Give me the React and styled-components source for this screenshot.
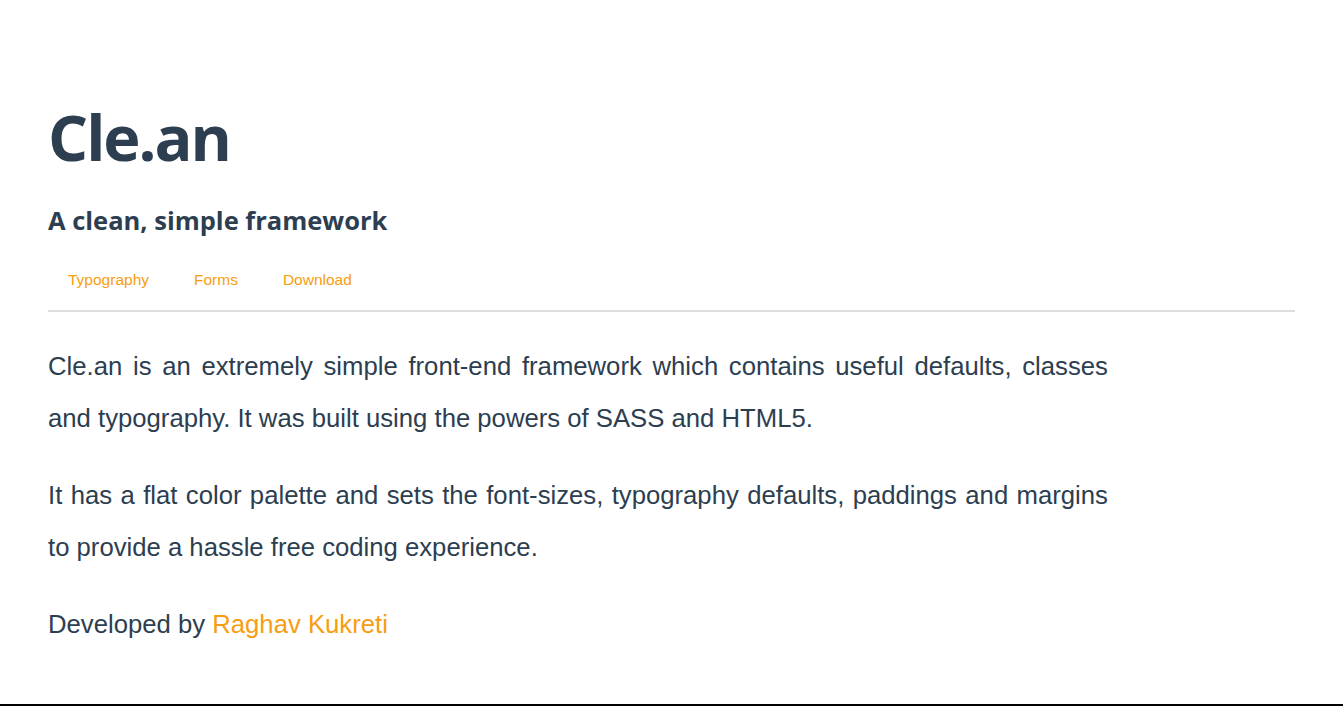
import styled, { createGlobalStyle } from "styled-components";

const GlobalStyle = createGlobalStyle`
    html, body {
        margin: 0;
        padding: 0;
        background: #fff;
    }
    body {
        font-family: "Liberation Sans", Arial, sans-serif;
        color: #2c3e50;
    }
`;

const Layout = styled.div`
    display: flex;
    flex-direction: column;
    min-height: 100vh;
`;

const Page = styled.div`
    padding: 0 48px;
`;

const Header = styled.header`
    padding-top: 92px;
    border-bottom: 2px solid #dddddd;
    padding-bottom: 20px;
`;

const Title = styled.h1`
    margin: 0;
    font-family: "Open Sans", "Noto Sans", sans-serif;
    font-weight: 700;
    font-size: 63px;
    line-height: 90px;
    letter-spacing: -2px;
    color: #2c3e50;
`;

const Subtitle = styled.h3`
    margin: 22px 0 0;
    font-family: "Open Sans", "Noto Sans", sans-serif;
    font-weight: 700;
    font-size: 25.5px;
    line-height: 32px;
    color: #2c3e50;
`;

const Nav = styled.nav`
    display: flex;
    margin-top: 34px;
    gap: 5px;
`;

const NavLink = styled.a`
    padding: 0 20px;
    font-size: 15.5px;
    line-height: 20px;
    color: #f89d10;
    text-decoration: none;
`;

const Content = styled.section`
    width: 85%;
    padding-top: 28px;
`;

const Paragraph = styled.p`
    margin: 0 0 25px;
    font-size: 25.7px;
    line-height: 52px;
    text-align: justify;
`;

const Accent = styled.a`
    color: #f89d10;
    text-decoration: none;
`;

const Footer = styled.footer`
    margin-top: auto;
    height: 2px;
    background: #000;
`;

function App() {
    return (
        <>
            <GlobalStyle />
            <Layout>
                <Page>
                    <Header>
                        <Title>Cle.an</Title>
                        <Subtitle>A clean, simple framework</Subtitle>
                        <Nav>
                            <NavLink href="#">Typography</NavLink>
                            <NavLink href="#">Forms</NavLink>
                            <NavLink href="#">Download</NavLink>
                        </Nav>
                    </Header>
                    <Content>
                        <Paragraph>
                            Cle.an is an extremely simple front-end framework which contains useful
                            defaults, classes and typography. It was built using the powers of SASS
                            and HTML5.
                        </Paragraph>
                        <Paragraph>
                            It has a flat color palette and sets the font-sizes, typography
                            defaults, paddings and margins to provide a hassle free coding
                            experience.
                        </Paragraph>
                        <Paragraph>
                            Developed by <Accent href="#">Raghav Kukreti</Accent>
                        </Paragraph>
                    </Content>
                </Page>
                <Footer />
            </Layout>
        </>
    );
}

export default App;
